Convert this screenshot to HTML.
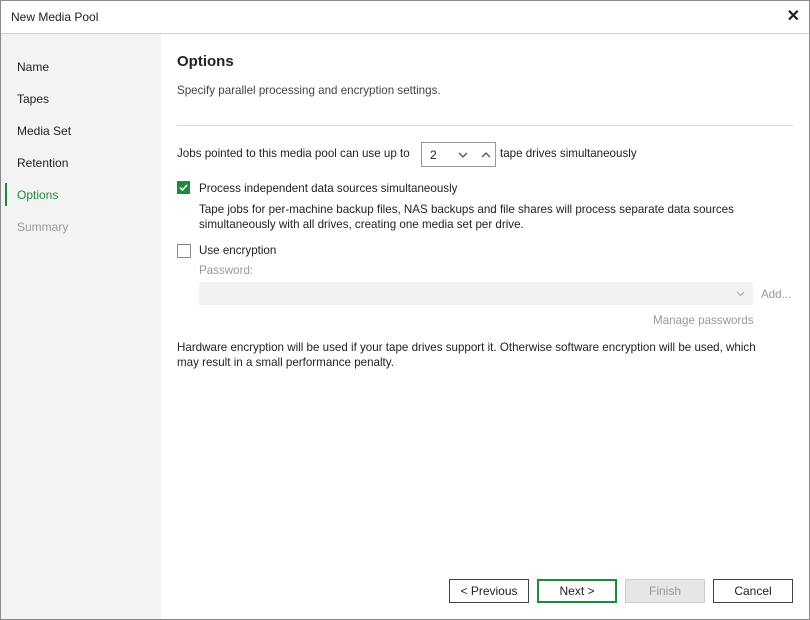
<!DOCTYPE html>
<html><head><style>
body{margin:0;width:810px;height:620px;overflow:hidden;font-family:"Liberation Sans",sans-serif;font-size:12px;color:#222;background:#fff}
.win{position:absolute;left:0;top:0;width:808px;height:618px;border:1px solid #8a8a8a;background:#fff}
.in{position:absolute;left:-1px;top:-1px;width:810px;height:620px}
.title{position:absolute;left:11px;top:10px;font-size:12px}
.x{position:absolute;right:10px;top:6px;font-size:16px;font-weight:bold}
.tb{position:absolute;left:1px;top:33px;width:808px;height:1px;background:#d0d0d0}
.side{position:absolute;left:1px;top:34px;width:160px;height:585px;background:#f3f3f3}
.side div{position:absolute;left:16px;font-size:12px}
.t{position:absolute;white-space:nowrap;font-size:11.6px}
.c{position:absolute;left:0;top:1px;width:810px;height:619px}
.btn{position:absolute;top:578px;width:78px;height:22px;border:1px solid #444;text-align:center;line-height:22px;font-size:12px;background:#fff}
</style></head><body><div class="win"><div class="in">
<div class="title">New Media Pool</div><div class="x">✕</div><div class="tb"></div>
<div class="side">
<div style="top:26px">Name</div><div style="top:58px">Tapes</div><div style="top:90px">Media Set</div><div style="top:122px">Retention</div>
<div style="top:154px;color:#1e8a3c">Options</div><div style="top:186px;color:#999">Summary</div>
<div style="left:4px;top:149px;width:2px;height:23px;background:#1e8a3c"></div>
</div>
<div class="c">
<div class="t" style="left:177px;top:52px;font-size:15px;font-weight:bold">Options</div>
<div class="t" style="left:177px;top:83px;color:#444">Specify parallel processing and encryption settings.</div>
<div style="position:absolute;left:177px;top:124px;width:616px;height:1px;background:#d8d8d8"></div>
<div class="t" style="left:177px;top:146px">Jobs pointed to this media pool can use up to</div>
<div style="position:absolute;left:421px;top:141px;width:73px;height:23px;border:1px solid #999"><span style="position:absolute;left:8px;top:5px">2</span>
<svg style="position:absolute;left:36px;top:8px" width="40" height="8"><path d="M1 2l4 4 4-4M24 6l4-4 4 4" fill="none" stroke="#555" stroke-width="1.3"/></svg></div>
<div class="t" style="left:500px;top:146px">tape drives simultaneously</div>
<div style="position:absolute;left:177px;top:180px;width:13px;height:13px;background:#1e8a3c"><svg width="13" height="13"><path d="M3 6.5l2.5 2.5 4.5-5" fill="none" stroke="#fff" stroke-width="1.6"/></svg></div>
<div class="t" style="left:199px;top:181px">Process independent data sources simultaneously</div>
<div class="t" style="left:199px;top:201px;line-height:15px">Tape jobs for per-machine backup files, NAS backups and file shares will process separate data sources<br>simultaneously with all drives, creating one media set per drive.</div>
<div style="position:absolute;left:177px;top:243px;width:12px;height:12px;border:1px solid #888"></div>
<div class="t" style="left:199px;top:243px">Use encryption</div>
<div class="t" style="left:199px;top:263px;color:#999">Password:</div>
<div style="position:absolute;left:199px;top:281px;width:554px;height:23px;background:#f2f2f2"><svg style="position:absolute;right:8px;top:9px" width="9" height="6"><path d="M1 1l3.5 3.5L8 1" fill="none" stroke="#aaa" stroke-width="1.2"/></svg></div>
<div class="t" style="left:761px;top:287px;color:#999">Add...</div>
<div class="t" style="left:653px;top:313px;color:#999">Manage passwords</div>
<div class="t" style="left:177px;top:339px;line-height:15px">Hardware encryption will be used if your tape drives support it. Otherwise software encryption will be used, which<br>may result in a small performance penalty.</div>
<div class="btn" style="left:449px">&lt; Previous</div>
<div class="btn" style="left:537px;border:2px solid #1e8a3c;width:76px;height:20px;line-height:20px">Next &gt;</div>
<div class="btn" style="left:625px;border-color:#ccc;background:#e5e6e7;color:#999">Finish</div>
<div class="btn" style="left:713px">Cancel</div>
</div>
</div></div></body></html>
